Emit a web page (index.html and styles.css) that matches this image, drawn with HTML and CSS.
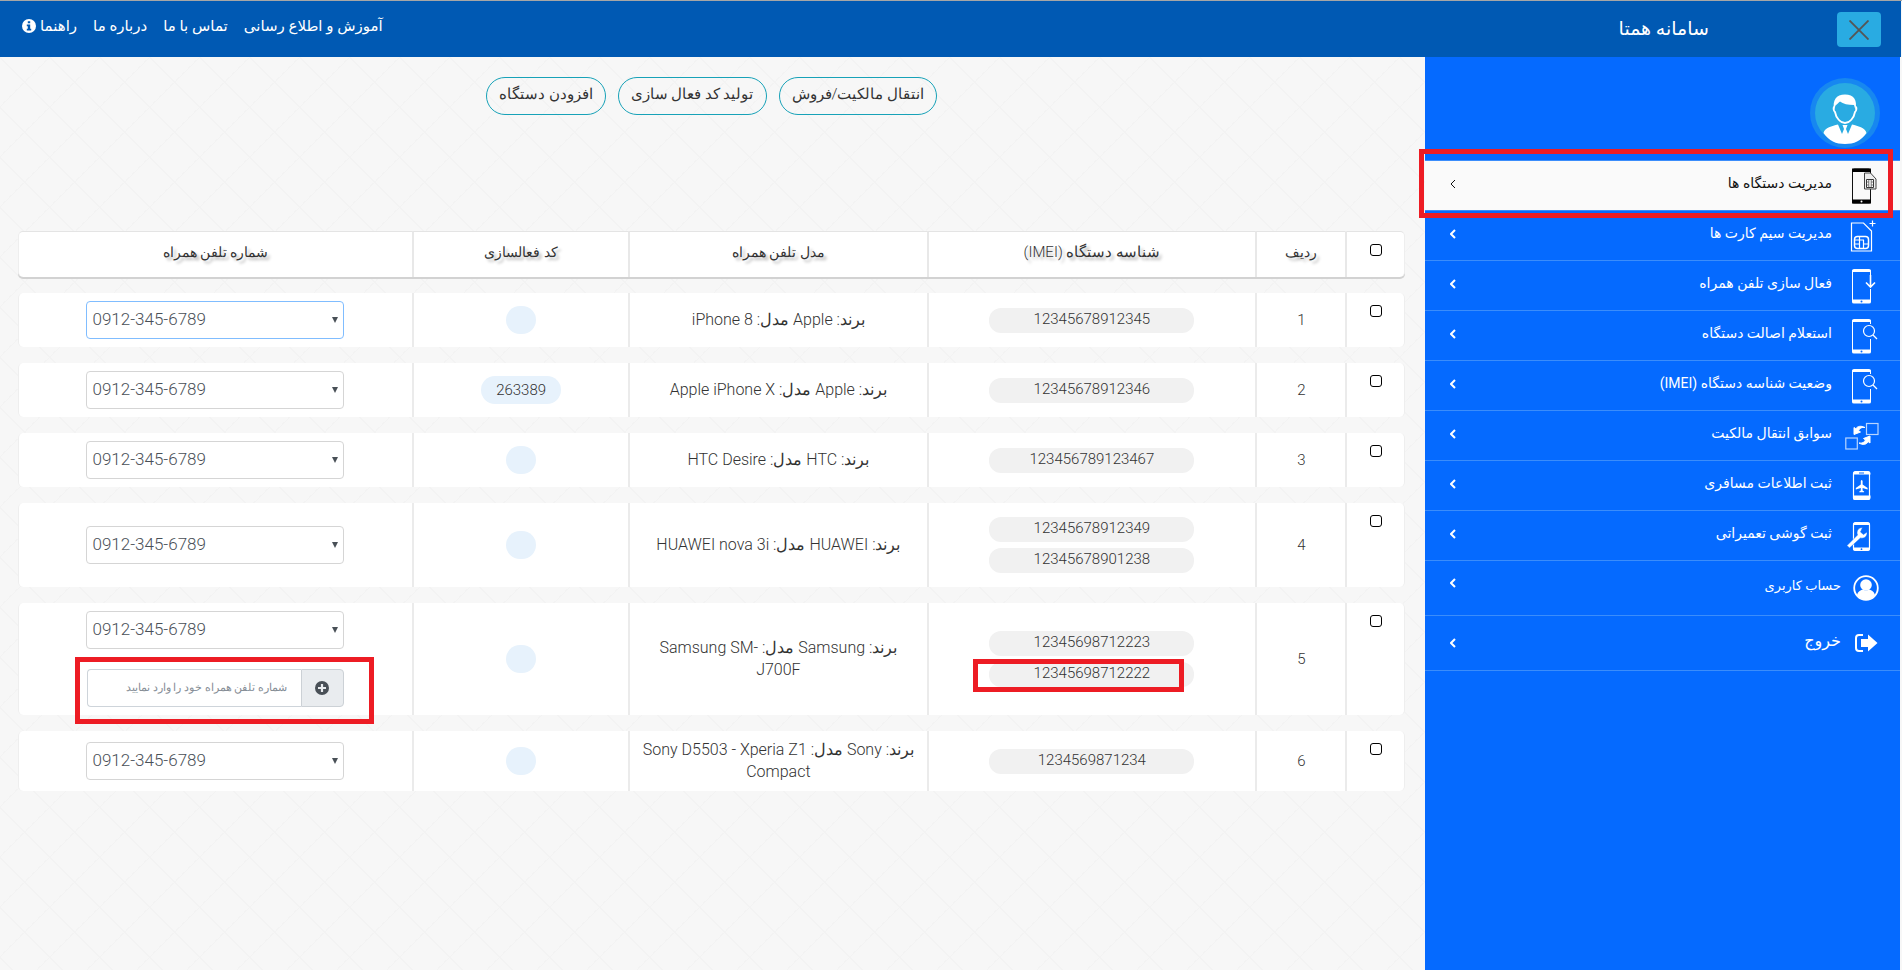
FILE: index.html
```html
<!DOCTYPE html>
<html lang="fa" dir="rtl">
<head>
<meta charset="utf-8">
<title>سامانه همتا</title>
<link rel="stylesheet" href="styles.css">
</head>
<body>
<header class="topbar">
  <div class="brand">
    <button class="close" type="button" aria-label="بستن منو">
      <svg width="20" height="20" viewBox="0 0 20 20"><path d="M0.500 0.500 19.500 19.500M19.500 0.500 0.500 19.500" stroke="#555" stroke-width="1.800" fill="none"/></svg>
    </button>
    <h1 class="title">سامانه همتا</h1>
  </div>
  <nav class="topnav">
    <a href="#">آموزش و اطلاع رسانی</a>
    <a href="#">تماس با ما</a>
    <a href="#">درباره ما</a>
    <a href="#" class="help">راهنما
      <svg width="14" height="14" viewBox="0 0 14 14"><circle cx="7" cy="7" r="7" fill="#fff"/><path d="M5.800 2.200h2.400v2H5.800zM4.800 5.500h3.400v4.300h1v1.700H4.800V9.800h1V7.200h-1z" fill="#0059b3"/></svg>
    </a>
  </nav>
</header>
<div class="layout">
  <aside class="sidebar">
    <div class="profile">
      <svg width="70" height="70" viewBox="0 0 70 70">
        <circle cx="35" cy="35" r="35" fill="#1787f0"/><circle cx="35" cy="35" r="30" fill="#29abe2"/>
        <path d="M13.500 55C15 49.500 22 48 28 46.500L32 56l2-5-1.500-4h5L36 51l2 5 4-9.500c6 1.500 13 3 14.500 8.500C51 63 44 66 35 66S19 63 13.500 55z" fill="#fff"/>
        <path d="M24.500 29c-1.500 0-1 4 .500 5 1 6 5.500 11 10 11s9-5 10-11c1.500-1 2-5 .500-5" fill="#29abe2" stroke="#fff" stroke-width="1.800"/>
        <path d="M24 32c-1.500-10 2-15.500 11-15.500S47.500 22 45.500 32l-1.500-5c-6 0-11-1-14-3.500-1.500 1.500-3.500 3-4.500 4z" fill="#fff"/>
      </svg>
    </div>
    <ul class="menu">
      <li class="active marked"><a href="#">
        <svg width="34" height="36" viewBox="0 0 34 36"><rect x="7.500" y="1" width="18" height="34" fill="#fafafa" stroke="#111" stroke-width="1"/><path d="M7 3q0-2.500 2.500-2.500h14Q26 .500 26 3v1H7zM7 31.500h19V34q0 1.500-2 1.500H9q-2 0-2-1.500z" fill="#000"/><circle cx="16.500" cy="33.500" r="1" fill="#fff"/><path d="M19.500 5h6l5.500 6v10H19.500z" fill="#eee" stroke="#444"/><path d="M21.500 11.500h7v8h-7z" fill="#fff" stroke="#333"/><path d="M23.800 11.500v8M26.200 11.500v8M21.500 14h2.300M21.500 17h2.300M26.200 14h2.300M26.200 17h2.300" stroke="#555" stroke-width=".800"/></svg>
        <span class="label">مدیریت دستگاه ها</span><svg class="chev" width="6" height="10" viewBox="0 0 6 10"><path d="M5 1 1 5l4 4"/></svg></a></li>
      <li><a href="#">
        <svg width="34" height="36" viewBox="0 0 34 36" fill="none" stroke="#fff" stroke-width="1.200"><path d="M6.500 5h12l8 8v20h-20z"/><path d="M24.500 5.500h6M27.500 2.500v6"/><rect x="9.500" y="18.500" width="14" height="12" rx="3" stroke-width="1.500"/><path d="M14.500 18.500v12M18.500 22v8.500M9.500 22h9.500M9.500 26h5M18.500 26h5M14.500 18.500h4" stroke-width="1.200"/></svg>
        <span class="label">مدیریت سیم کارت ها</span><svg class="chev" width="6" height="10" viewBox="0 0 6 10"><path d="M5 1 1 5l4 4"/></svg></a></li>
      <li><a href="#">
        <svg width="34" height="36" viewBox="0 0 34 36"><path d="M25.500 7V2.500H7.500v31h18V21" fill="none" stroke="#fff"/><path d="M7 3q0-2 2-2h15q2 0 2 2v1H7zM7 31.500h19V34q0 1.500-2 1.500H9q-2 0-2-1.500z" fill="#fff"/><circle cx="16.500" cy="33.500" r="1" fill="#056aff"/><path d="M25.500 7v11M21 14.500l4.500 4.500 4.500-4.500" fill="none" stroke="#fff" stroke-width="1.600"/></svg>
        <span class="label">فعال سازی تلفن همراه</span><svg class="chev" width="6" height="10" viewBox="0 0 6 10"><path d="M5 1 1 5l4 4"/></svg></a></li>
      <li><a href="#">
        <svg width="34" height="36" viewBox="0 0 34 36"><path d="M25.500 6V2.500H7.500v31h18V21" fill="none" stroke="#fff"/><path d="M7 3q0-2 2-2h15q2 0 2 2v1H7zM7 31.500h19V34q0 1.500-2 1.500H9q-2 0-2-1.500z" fill="#fff"/><circle cx="16.500" cy="33.500" r="1" fill="#056aff"/><g fill="none" stroke="#fff" stroke-width="1.200"><circle cx="24" cy="13" r="5.500"/><path d="m28 17 4 4"/></g></svg>
        <span class="label">استعلام اصالت دستگاه</span><svg class="chev" width="6" height="10" viewBox="0 0 6 10"><path d="M5 1 1 5l4 4"/></svg></a></li>
      <li><a href="#">
        <svg width="34" height="36" viewBox="0 0 34 36"><path d="M25.500 6V2.500H7.500v31h18V21" fill="none" stroke="#fff"/><path d="M7 3q0-2 2-2h15q2 0 2 2v1H7zM7 31.500h19V34q0 1.500-2 1.500H9q-2 0-2-1.500z" fill="#fff"/><circle cx="16.500" cy="33.500" r="1" fill="#056aff"/><g fill="none" stroke="#fff" stroke-width="1.200"><circle cx="24" cy="13" r="5.500"/><path d="m28 17 4 4"/></g></svg>
        <span class="label">وضعیت شناسه دستگاه (IMEI)</span><svg class="chev" width="6" height="10" viewBox="0 0 6 10"><path d="M5 1 1 5l4 4"/></svg></a></li>
      <li><a href="#">
        <svg width="34" height="36" viewBox="0 0 34 36"><g fill="none" stroke="#b9d5ff" stroke-width="1.200"><rect x="21.500" y="5.500" width="11.500" height="11"/><rect x=".800" y="20" width="11.500" height="11"/></g><path d="M20 9.500c-3-.500-5.500.500-6.500 3l2 1.500-6.500 2.500L9 9.500l1.800 1.300C12.500 8 16 7.500 20 9.500zM14 25c3 .500 5.500-.500 6.500-3l-2-1.500L25 18v7l-1.800-1.300C21.500 26.500 18 27.500 14 25z" fill="#fff" stroke="#fff"/></svg>
        <span class="label">سوابق انتقال مالکیت</span><svg class="chev" width="6" height="10" viewBox="0 0 6 10"><path d="M5 1 1 5l4 4"/></svg></a></li>
      <li><a href="#">
        <svg width="34" height="36" viewBox="0 0 34 36"><rect x="8.500" y="4" width="16" height="27.500" rx="1.500" fill="none" stroke="#fff" stroke-width="1.200"/><path d="M8 6q0-3 2.500-3h12.500Q25.500 3 25.500 6v.500H8zM8 27.500h17.500V30q0 2-2 2H10q-2 0-2-2z" fill="#fff"/><path d="M14 5h5" stroke="#056aff"/><path d="M15.800 13q.900-2 1.800 0v3.500l5 3.500v1.500l-5-1.500v2.500l1.500 1v.800h-4.800v-.800l1.500-1V20l-5 1.500V20l5-3.500z" fill="#fff"/></svg>
        <span class="label">ثبت اطلاعات مسافری</span><svg class="chev" width="6" height="10" viewBox="0 0 6 10"><path d="M5 1 1 5l4 4"/></svg></a></li>
      <li><a href="#">
        <svg width="34" height="36" viewBox="0 0 34 36"><rect x="8.500" y="5" width="16" height="27" rx="1.500" fill="none" stroke="#fff" stroke-width="1.200"/><path d="M8 7q0-3 2.500-3h12Q25 4 25 7H8zM8 29.500h17V31q0 2-2 2H10q-2 0-2-2z" fill="#fff"/><circle cx="16.500" cy="31.200" r=".900" fill="#056aff"/><path d="M17.500 9.500c-4 0-6.500 3.500-5 7.500L2 27.500 4.500 30 15.500 20c4 1 7-2 6.500-6l-3.500 2.500-3-2.500z" fill="#fff" stroke="#056aff" stroke-width=".500"/></svg>
        <span class="label">ثبت گوشی تعمیراتی</span><svg class="chev" width="6" height="10" viewBox="0 0 6 10"><path d="M5 1 1 5l4 4"/></svg></a></li>
      <li class="tall"><a href="#">
        <svg width="26" height="26" viewBox="0 0 26 26"><circle cx="13" cy="13" r="11.800" fill="none" stroke="#fff" stroke-width="1.800"/><circle cx="13" cy="10" r="5.800" fill="#fff"/><path d="M4 20c1-4 4-5 6-5.500q3 2 6 0c2 .500 5 1.500 6 5.500q-3 4.500-9 4.500T4 20z" fill="#fff"/></svg>
        <span class="label">حساب کاربری</span><svg class="chev" width="6" height="10" viewBox="0 0 6 10"><path d="M5 1 1 5l4 4"/></svg></a></li>
      <li class="tall exit"><a href="#">
        <svg width="26" height="26" viewBox="0 0 26 26"><path d="M10 5H6Q3 5 3 8v10q0 3 3 3h4" fill="none" stroke="#fff" stroke-width="2"/><path d="M15 4.500 24.500 13 15 21.500V17H8V9h7z" fill="#fff"/></svg>
        <span class="label">خروج</span><svg class="chev" width="6" height="10" viewBox="0 0 6 10"><path d="M5 1 1 5l4 4"/></svg></a></li>
    </ul>
  </aside>
  <main class="content">
    <div class="actions">
      <button type="button">انتقال مالکیت/فروش</button>
      <button type="button">تولید کد فعال سازی</button>
      <button type="button">افزودن دستگاه</button>
    </div>
    <table class="devices">
      <colgroup><col class="c-check"><col class="c-row"><col class="c-imei"><col class="c-model"><col class="c-code"><col class="c-phone"></colgroup>
      <thead>
        <tr><th class="check"><input type="checkbox" aria-label="انتخاب همه"></th><th>ردیف</th><th class="wide">شناسه دستگاه (IMEI)</th><th>مدل تلفن همراه</th><th>کد فعالسازی</th><th>شماره تلفن همراه</th></tr>
      </thead>
      <tbody>
        <tr><td class="check"><input type="checkbox" aria-label="انتخاب ردیف 1"></td><td>1</td><td><div class="imeis"><span>12345678912345</span></div></td><td class="model">برند: Apple مدل: iPhone 8</td><td><span class="code"></span></td>
          <td class="phone"><div class="pick"><select class="focus" aria-label="شماره تلفن همراه"><option>0912-345-6789</option></select></div></td></tr>
        <tr><td class="check"><input type="checkbox" aria-label="انتخاب ردیف 2"></td><td>2</td><td><div class="imeis"><span>12345678912346</span></div></td><td class="model">برند: Apple مدل: Apple iPhone X</td><td><span class="code">263389</span></td>
          <td class="phone"><div class="pick"><select aria-label="شماره تلفن همراه"><option>0912-345-6789</option></select></div></td></tr>
        <tr><td class="check"><input type="checkbox" aria-label="انتخاب ردیف 3"></td><td>3</td><td><div class="imeis"><span>123456789123467</span></div></td><td class="model">برند: HTC مدل: HTC Desire</td><td><span class="code"></span></td>
          <td class="phone"><div class="pick"><select aria-label="شماره تلفن همراه"><option>0912-345-6789</option></select></div></td></tr>
        <tr><td class="check"><input type="checkbox" aria-label="انتخاب ردیف 4"></td><td>4</td><td><div class="imeis"><span>12345678912349</span><span>12345678901238</span></div></td><td class="model">برند: HUAWEI مدل: HUAWEI nova 3i</td><td><span class="code"></span></td>
          <td class="phone"><div class="pick"><select aria-label="شماره تلفن همراه"><option>0912-345-6789</option></select></div></td></tr>
        <tr><td class="check"><input type="checkbox" aria-label="انتخاب ردیف 5"></td><td>5</td><td><div class="imeis"><span>12345698712223</span><span class="marked">12345698712222</span></div></td><td class="model">برند: Samsung مدل: Samsung SM-J700F</td><td><span class="code"></span></td>
          <td class="phone"><div class="pick"><select aria-label="شماره تلفن همراه"><option>0912-345-6789</option></select></div>
            <div class="add marked"><button type="button" aria-label="افزودن شماره"><svg width="14" height="14" viewBox="0 0 14 14"><circle cx="7" cy="7" r="7" fill="#495057"/><path d="M7 3v8M3 7h8" stroke="#e9ecef" stroke-width="2.200"/></svg></button><input type="text" placeholder="شماره تلفن همراه خود را وارد نمایید" aria-label="شماره تلفن همراه جدید"></div></td></tr>
        <tr><td class="check"><input type="checkbox" aria-label="انتخاب ردیف 6"></td><td>6</td><td><div class="imeis"><span>1234569871234</span></div></td><td class="model">برند: Sony مدل: Sony D5503 - Xperia Z1 Compact</td><td><span class="code"></span></td>
          <td class="phone"><div class="pick"><select aria-label="شماره تلفن همراه"><option>0912-345-6789</option></select></div></td></tr>
      </tbody>
    </table>
  </main>
</div>
</body>
</html>
```
FILE: styles.css
```css
* { box-sizing: border-box; }
body {
  margin: 0;
  min-height: 100vh;
  display: flex;
  flex-direction: column;
  padding-right: 2px;
  border-top: 1px solid #a6a6a6;
  background: #f7f7f7;
  color: #333;
  font: 300 15px/22px Roboto, "DejaVu Sans", sans-serif;
}
a { color: inherit; text-decoration: none; }
button, input, select { font: inherit; color: inherit; }

.topbar {
  display: flex;
  justify-content: space-between;
  height: 56px;
  margin-right: -1px;
  background: #0059b3;
  color: #fff;
  font-weight: 400;
}
.brand {
  width: 25%;
  display: flex;
  padding: 11px 20px;
}
.close {
  width: 44px;
  height: 35px;
  flex: none;
  display: grid;
  place-items: center;
  padding: 0;
  border: 0;
  border-radius: 4px;
  background: #29abe2;
}
.title { margin: 4px 128px 0 0; font-size: 19px; font-weight: 400; line-height: 26px; white-space: nowrap; }
.topnav { display: flex; align-items: center; gap: 16px; padding: 0 22px 6px; font-size: 15px; }
.help { display: flex; align-items: center; gap: 4px; }

.layout { flex: 1; display: flex; }
.sidebar { width: 25%; flex: none; background: #056aff; color: #fff; }
.profile { height: 103px; padding: 21px 20px 0 0; }
.menu { margin: 0; padding: 0; list-style: none; font-size: 14px; font-weight: 400; border-top: 1px solid #3b8dfb; }
.menu li { position: relative; border-bottom: 1px solid #3b8dfb; }
.menu a { display: flex; align-items: center; height: 49px; padding: 0 21px 0 25px; }
.menu .label { flex: 1; margin: 0 13px 5px 0; }
.menu .tall a { height: 54px; }
.menu .tall .label { margin-right: 12px; font-size: 13px; }
.menu .tall .chev { margin-bottom: 10px; }
.menu .exit .label { font-size: 16px; }
.menu .exit .chev { margin-bottom: 0; }
.chev { flex: none; margin-bottom: 4px; fill: none; stroke: currentColor; stroke-width: 2; }
.menu .active { background: #fafafa; color: #111; }
.active .chev { stroke-width: 1; }

.marked { position: relative; }
.marked::after { content: ""; position: absolute; z-index: 2; border: 5px solid #ed1c24; pointer-events: none; }
.menu .marked::after { inset: -12px 7px -8px -6px; }
.imeis .marked::after { inset: -3px 10px -5px -16px; }
.add.marked::after { inset: -12px -30px -17px -12px; }

.content {
  flex: 1;
  padding: 20px 20px 40px 18px;
  background-color: #f7f7f7;
  background-image:
    linear-gradient(45deg, transparent 49%, #f3f3f3 49%, #f3f3f3 51%, transparent 51%),
    linear-gradient(-45deg, transparent 49%, #f3f3f3 49%, #f3f3f3 51%, transparent 51%);
  background-size: 50px 50px;
}
.actions { display: flex; justify-content: center; gap: 12px; }
.actions button {
  height: 38px;
  padding: 0 12px 4px;
  border: 1px solid #17a2b8;
  border-radius: 19px;
  background: transparent;
  font-size: 15px;
}

.devices { width: 100%; margin-top: 100px; table-layout: fixed; border-collapse: separate; border-spacing: 0 16px; }
.c-check { width: 4.3%; }
.c-row { width: 6.5%; }
.c-imei { width: 23.7%; }
.c-model { width: 21.5%; }
.c-code { width: 15.6%; }
.c-phone { width: 28.4%; }
.devices th {
  height: 46px;
  padding: 0 0 6px;
  background: #fff;
  border-top: 1px solid #e4e4e4;
  border-left: 2px solid #e8e8e8;
  box-shadow: 0 2px 0 #d2d2d2;
  font-size: 14px;
  font-weight: 300;
  text-shadow: 3px 3px 3px #bbb;
}
.devices .wide { font-size: 15px; }
.devices td { padding: 8px 0; background: #fff; border-left: 2px solid #ebebeb; text-align: center; }
.devices tr > :first-child { border-radius: 0 5px 5px 0; border-right: 1px solid #eee; }
.devices tr > :last-child { border-radius: 5px 0 0 5px; border-left: 1px solid #eee; }
.devices .check { vertical-align: top; padding: 12px 0 0; line-height: 12px; }
.check input {
  appearance: none;
  width: 12px;
  height: 12px;
  margin: 0;
  border: 1px solid #000;
  border-radius: 3px;
  background: #fff;
  vertical-align: top;
}
.imeis { width: 205px; margin: 6px auto; display: grid; gap: 6px; }
.imeis span { height: 25px; border-radius: 12px; background: #f1f1f1; }
.devices .model { padding: 8px 10px; font-size: 16px; }
.code { display: inline-block; min-width: 30px; height: 28px; padding: 3px 15px; border-radius: 14px; background: #e7f2fc; vertical-align: middle; }
.pick { position: relative; width: 258px; margin: 0 auto; direction: ltr; }
.pick::after { content: ""; position: absolute; top: 16px; right: 6px; border: 3px solid transparent; border-top: 6px solid #495057; border-bottom: 0; }
.pick select {
  display: block;
  appearance: none;
  width: 100%;
  height: 38px;
  padding: 0 5px 3px;
  border: 1px solid #d5d5d5;
  border-radius: 4px;
  background: #fff;
  color: #495057;
  font-size: 17px;
}
.pick .focus { border-color: #80bdff; }
.add { display: flex; width: 257px; height: 38px; margin: 20px auto 0; }
.add button { width: 43px; flex: none; padding: 0; display: grid; place-items: center; border: 1px solid #ccd1d6; border-radius: 0 4px 4px 0; background: #e9ecef; }
.add input { flex: 1; min-width: 0; padding: 0 14px; border: 1px solid #ced4da; border-right: 0; border-radius: 4px 0 0 4px; background: #fff; font-size: 11px; }
.add input::placeholder { color: #868e96; opacity: 1; }
```
